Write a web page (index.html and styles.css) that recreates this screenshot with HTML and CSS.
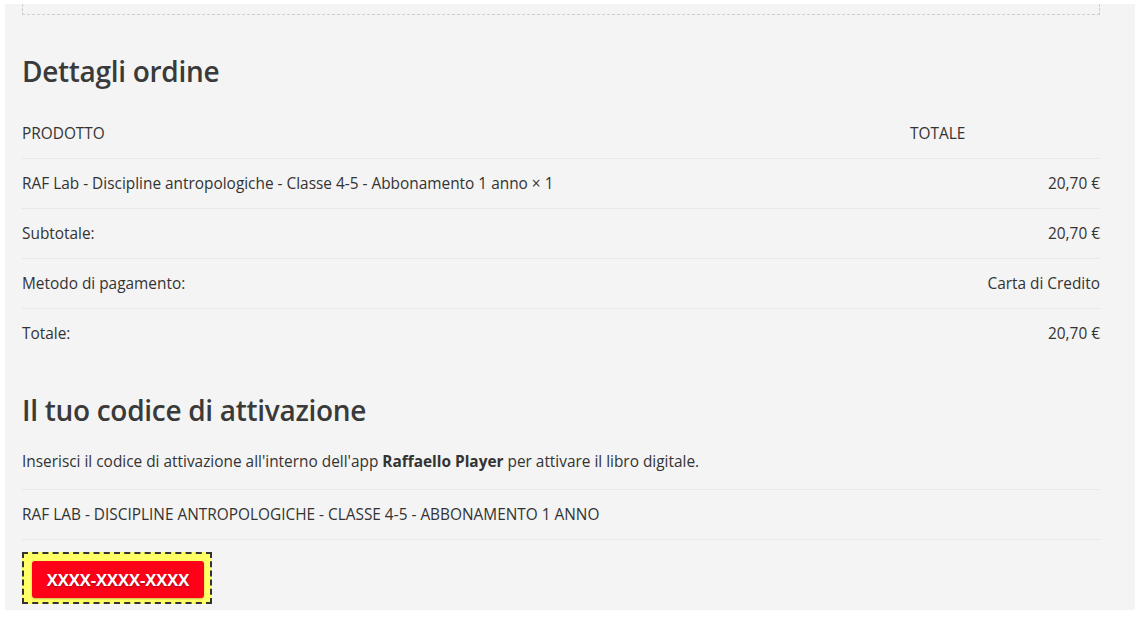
FILE: index.html
```html
<!DOCTYPE html>
<html>
  <head>
    <title>Dettagli ordine</title>
    <link rel="stylesheet" href="styles.css">
  </head>
  <body>
    <div id="order-page">
      <!-- bottom of the customer box above -->
      <div class="box-end"></div>

      <h2>Dettagli ordine</h2>
      <table class="order-table">
        <thead>
          <tr>
            <th>PRODOTTO</th>
            <th class="col-total">TOTALE</th>
          </tr>
        </thead>
        <tbody>
          <tr>
            <td>RAF Lab - Discipline antropologiche - Classe 4-5 - Abbonamento 1 anno &times; 1</td>
            <td class="amount">20,70 &euro;</td>
          </tr>
          <tr>
            <td>Subtotale:</td>
            <td class="amount">20,70 &euro;</td>
          </tr>
          <tr>
            <td>Metodo di pagamento:</td>
            <td class="amount">Carta di Credito</td>
          </tr>
          <tr>
            <td>Totale:</td>
            <td class="amount">20,70 &euro;</td>
          </tr>
        </tbody>
      </table>

      <h2 class="second">Il tuo codice di attivazione</h2>
      <p class="intro">Inserisci il codice di attivazione all'interno dell'app <strong>Raffaello Player</strong> per attivare il libro digitale.</p>
      <div class="product-name">RAF LAB - DISCIPLINE ANTROPOLOGICHE - CLASSE 4-5 - ABBONAMENTO 1 ANNO</div>

      <div class="code-box">
        <span class="code">XXXX-XXXX-XXXX</span>
      </div>
    </div>
  </body>
</html>
```

FILE: styles.css
```css
body {
  font-family: "Open Sans", Arial, sans-serif;
  background-color: #fff;
  color: #333;
  margin: 0;
  padding: 0;
}

#order-page {
  margin: 4px 5px 0 5px;
  height: 606px;
  background-color: #f4f4f4;
  padding: 0 35px 0 17px;
  box-sizing: border-box;
}

.box-end {
  height: 10px;
  border: 1px dashed #cfcfcf;
  border-top: none;
}

h2 {
  font-size: 28px;
  font-weight: 600;
  line-height: 34px;
  letter-spacing: -0.3px;
  color: #3a3a3a;
  margin: 39px 0 21px 0;
}

h2.second {
  margin-top: 35px;
}

/* Order table */
.order-table {
  width: 100%;
  border-collapse: collapse;
  font-size: 15.4px;
  font-weight: 500;
}

.order-table th,
.order-table td {
  padding: 14px 0;
  line-height: 21px;
  text-align: left;
  font-weight: 500;
  color: #333;
}

.order-table tr {
  border-bottom: 1px solid #e8e8e8;
}

.order-table tbody tr:last-child {
  border-bottom: none;
}

.order-table .col-total {
  width: 190px;
}

.order-table .amount {
  text-align: right;
}

/* Activation code */
.intro {
  font-size: 15.4px;
  font-weight: 500;
  line-height: 21px;
  margin: 24px 0 0 0;
  padding-bottom: 17px;
  border-bottom: 1px solid #e8e8e8;
}

.intro strong {
  font-weight: 700;
}

.product-name {
  font-size: 15.4px;
  font-weight: 500;
  line-height: 21px;
  padding: 14px 0;
  border-bottom: 1px solid #e8e8e8;
}

.code-box {
  display: inline-block;
  margin-top: 12px;
  padding: 7px 6px 4px 8px;
  background-color: #ffff66;
  border: 2px dashed #333;
}

.code {
  display: block;
  width: 172px;
  padding: 8px 0;
  line-height: 21px;
  text-align: center;
  background-color: #ff0019;
  border-radius: 3px;
  color: #fff;
  font-size: 16.5px;
  font-weight: 700;
  text-shadow: 0 1px 2px rgba(0, 0, 0, 0.4);
  box-shadow: 0 1px 2px rgba(0, 0, 0, 0.25);
}
```
